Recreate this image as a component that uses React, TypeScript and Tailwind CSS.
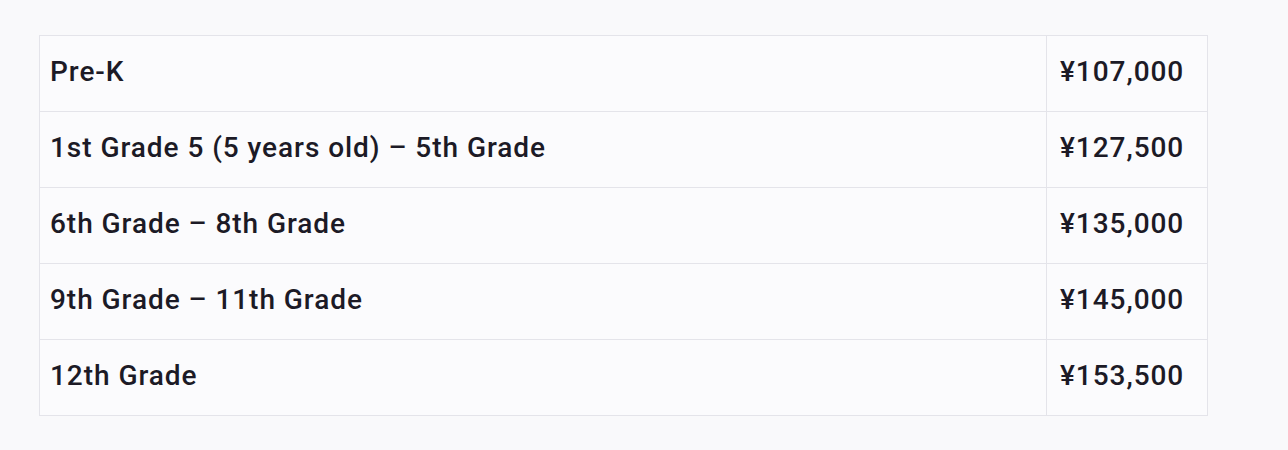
import React from "react";

const rows: [string, string][] = [
  ["Pre-K", "¥107,000"],
  ["1st Grade 5 (5 years old) – 5th Grade", "¥127,500"],
  ["6th Grade – 8th Grade", "¥135,000"],
  ["9th Grade – 11th Grade", "¥145,000"],
  ["12th Grade", "¥153,500"],
];

export default function App() {
  return (
    <div className="w-[1288px] h-[450px] bg-[#f9f9fb] pt-[35px] pl-[39px]" style={{ fontFamily: "Roboto, 'Noto Sans', sans-serif" }}>
      <table className="w-[1169px] border-collapse bg-[#fbfbfd] text-[#1c1a26] text-[28px] leading-[32px] font-medium tracking-[0.95px]">
        <tbody>
          {rows.map(([a, b]) => (
            <tr key={a} className="h-[76px]">
              <td className="border border-[#e4e4ea] pl-[10px] pb-[3px] align-middle">{a}</td>
              <td className="border border-[#e4e4ea] pl-[13px] pb-[3px] w-[161px] align-middle">{b}</td>
            </tr>
          ))}
        </tbody>
      </table>
    </div>
  );
}
